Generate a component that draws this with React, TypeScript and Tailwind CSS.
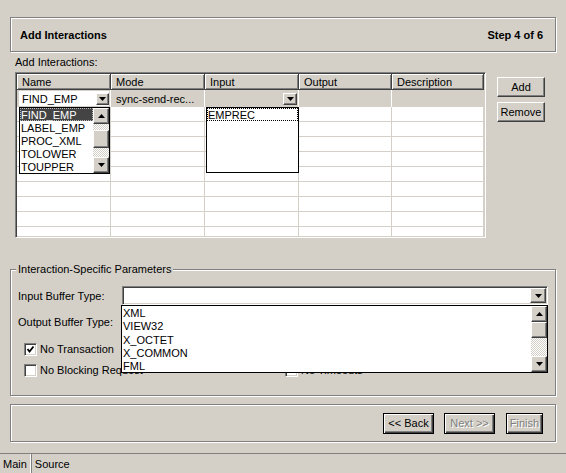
import React from 'react'

const raised =
  'border border-t-white border-l-white border-r-[#404040] border-b-[#404040] shadow-[inset_-1px_-1px_0_#808080]'
const sunken =
  'border border-t-[#808080] border-l-[#808080] border-r-white border-b-white shadow-[inset_1px_1px_0_#404040,inset_-1px_-1px_0_#d4d0c8]'
const etched = 'border border-[#808080] shadow-[inset_1px_1px_0_#ffffff,1px_1px_0_#ffffff]'
const checker =
  'bg-[image:repeating-conic-gradient(#d4d0c8_0%_25%,#ffffff_0%_50%)] bg-[length:2px_2px]'

const cols = [
  { label: 'Name', w: 'w-[94px]' },
  { label: 'Mode', w: 'w-[94px]' },
  { label: 'Input', w: 'w-[94px]' },
  { label: 'Output', w: 'w-[93px]' },
  { label: 'Description', w: 'w-[92px]' },
]

function Arrow({ up }: { up?: boolean }) {
  return (
    <svg width="7" height="4" viewBox="0 0 7 4">
      <polygon points={up ? '0,4 7,4 3.5,0' : '0,0 7,0 3.5,4'} fill="#000" />
    </svg>
  )
}

function ArrowButton({ up, size }: { up?: boolean; size: string }) {
  return (
    <div className={`flex shrink-0 items-center justify-center bg-[#d4d0c8] ${raised} ${size}`}>
      <Arrow up={up} />
    </div>
  )
}

function Combo() {
  return (
    <div className={`flex h-[19px] w-[426px] justify-end bg-white p-px ${sunken}`}>
      <ArrowButton size="w-[16px] h-[15px]" />
    </div>
  )
}

function CheckBox({ checked, label }: { checked?: boolean; label: string }) {
  return (
    <div className="flex h-[13px] items-center">
      <div className={`flex h-[13px] w-[13px] items-center justify-center bg-white ${sunken}`}>
        {checked && (
          <svg width="9" height="9" viewBox="0 0 9 9">
            <polyline points="1.5,4 3.5,6.5 7.5,1.5" fill="none" stroke="#000" strokeWidth="1.8" />
          </svg>
        )}
      </div>
      <span className="ml-[3px] whitespace-nowrap">{label}</span>
    </div>
  )
}

function WinButton({ label, w, disabled, def }: { label: string; w: string; disabled?: boolean; def?: boolean }) {
  return (
    <div
      className={`flex h-[21px] items-center justify-center ${w} ${
        def
          ? 'border border-black shadow-[inset_1px_1px_0_#ffffff,inset_-1px_-1px_0_#404040,inset_-2px_-2px_0_#808080]'
          : raised
      } ${disabled ? 'text-[#808080] [text-shadow:1px_1px_0_#ffffff]' : ''}`}
    >
      {label}
    </div>
  )
}

export default function App() {
  const names = ['FIND_EMP', 'LABEL_EMP', 'PROC_XML', 'TOLOWER', 'TOUPPER']
  const buffers = ['XML', 'VIEW32', 'X_OCTET', 'X_COMMON', 'FML']

  return (
    <div className="flex h-[473px] w-[566px] flex-col bg-[#d4d0c8] font-['Liberation_Sans',Arial,sans-serif] text-[11px] text-black">
      <div className="px-[10px] pt-[17px]">
        {/* Wizard header */}
        <div className={`flex h-[35px] items-center justify-between pl-[9px] pr-[12px] pt-px font-bold ${etched}`}>
          <span>Add Interactions</span>
          <span>Step 4 of 6</span>
        </div>

        <div className="mt-[3px] h-[13px] pl-[5px] leading-[14px]">Add Interactions:</div>

        {/* Interactions table */}
        <div className="mt-[4px] flex">
          <div className={`relative ml-[5px] h-[166px] w-[471px] bg-white p-px ${sunken}`}>
            <div className="h-full overflow-hidden">
              <div className="flex h-[16px]">
                {cols.map((c) => (
                  <div
                    key={c.label}
                    className={`${c.w} h-full border-b border-r border-b-[#404040] border-r-[#404040] bg-[#d4d0c8] pl-[5px] pt-px leading-[15px] shadow-[inset_1px_1px_0_#ffffff,inset_-1px_-1px_0_#808080]`}
                  >
                    {c.label}
                  </div>
                ))}
              </div>
              <div className="flex h-[17px] bg-[#d4d0c8]">
                <div className="flex w-[94px] items-center border-r border-white pl-[2px] pr-[1px]">
                  <div className="flex h-[15px] flex-1 items-center justify-between bg-white pl-[3px]">
                    <span className="pt-px">FIND_EMP</span>
                    <ArrowButton size="w-[13px] h-[12px]" />
                  </div>
                </div>
                <div className="w-[94px] truncate border-r border-white pl-[5px] leading-[19px]">sync-send-rec...</div>
                <div className="flex w-[94px] items-center justify-end border-r border-white pr-[1px]">
                  <ArrowButton size="w-[14px] h-[12px]" />
                </div>
                <div className="w-[93px] border-r border-white" />
                <div className="w-[92px]" />
              </div>
              {Array.from({ length: 9 }).map((_, i) => (
                <div key={i} className="flex h-[15px] border-b border-[#d4d0c8]">
                  {cols.map((c) => (
                    <div key={c.label} className={`${c.w} h-full border-r border-[#d4d0c8]`} />
                  ))}
                </div>
              ))}
            </div>

            {/* Name dropdown list */}
            <div className="absolute left-[3px] top-[34px] flex h-[67px] w-[91px] border border-black bg-white">
              <div className="flex-1">
                {names.map((n, i) => (
                  <div
                    key={n}
                    className={`h-[13px] pl-[1px] leading-[14px] ${
                      i === 0 ? 'bg-[#444444] text-white outline-1 outline-dotted outline-[#bbbbbb] -outline-offset-1' : ''
                    }`}
                  >
                    {n}
                  </div>
                ))}
              </div>
              <div className="flex w-[16px] flex-col">
                <ArrowButton up size="w-[16px] h-[16px]" />
                <div className={`h-[6px] ${checker}`} />
                <div className={`h-[18px] bg-[#d4d0c8] ${raised}`} />
                <div className={`h-[9px] ${checker}`} />
                <ArrowButton size="w-[16px] h-[16px]" />
              </div>
            </div>

            {/* Input dropdown list */}
            <div className="absolute left-[190px] top-[34px] h-[66px] w-[93px] border border-black bg-white">
              <div className="h-[13px] pl-[1px] leading-[14px] outline-1 outline-dotted outline-black -outline-offset-1">
                EMPREC
              </div>
            </div>
          </div>

          <div className="ml-[11px] mt-[5px] flex flex-col">
            <WinButton label="Add" w="w-[48px] !h-[20px]" />
            <div className="mt-[5px]">
              <WinButton label="Remove" w="w-[48px] !h-[20px]" />
            </div>
          </div>
        </div>

        {/* Interaction-Specific Parameters */}
        <div className={`relative mt-[31px] h-[127px] pl-[7px] pt-[16px] ${etched}`}>
          <span className="absolute -top-[8px] left-[5px] bg-[#d4d0c8] px-[2px] leading-[15px]">
            Interaction-Specific Parameters
          </span>
          <div className="flex h-[19px] items-center">
            <span className="w-[104px] pt-px">Input Buffer Type:</span>
            <Combo />
          </div>
          <div className="mt-[7px] flex h-[19px] items-center">
            <span className="w-[104px] pt-px">Output Buffer Type:</span>
            <Combo />
          </div>
          <div className="ml-[6px] mt-[12px] grid grid-cols-[261px_1fr] gap-y-[8px]">
            <CheckBox checked label="No Transaction" />
            <CheckBox label="No Reply" />
            <CheckBox label="No Blocking Request" />
            <CheckBox label="No Timeouts" />
          </div>

          <div className="absolute left-[110px] top-[35px] flex h-[68px] w-[427px] border border-black bg-white">
            <div className="flex-1 overflow-hidden">
              {buffers.map((b) => (
                <div key={b} className="h-[13.3px] pl-[1px] leading-[14px]">
                  {b}
                </div>
              ))}
            </div>
            <div className="flex w-[16px] flex-col">
              <ArrowButton up size="w-[16px] h-[16px]" />
              <div className={`h-[16px] bg-[#d4d0c8] ${raised}`} />
              <div className={`h-[18px] ${checker}`} />
              <ArrowButton size="w-[16px] h-[16px]" />
            </div>
          </div>
        </div>

        {/* Wizard navigation */}
        <div className={`mt-[8px] flex h-[38px] items-center justify-end pr-[12px] ${etched}`}>
          <WinButton def label="<< Back" w="w-[51px]" />
          <div className="ml-[10px]">
            <WinButton def disabled label="Next >>" w="w-[51px]" />
          </div>
          <div className="ml-[11px]">
            <WinButton def disabled label="Finish" w="w-[37px]" />
          </div>
        </div>
      </div>

      {/* Editor tabs */}
      <div className="mt-auto flex h-[20px] border-t border-[#808080]">
        <div className="h-full border-r border-white px-[3px] leading-[20px] shadow-[1px_0_0_#808080]">Main</div>
        <div className="pl-[4px] leading-[20px]">Source</div>
      </div>
    </div>
  )
}
